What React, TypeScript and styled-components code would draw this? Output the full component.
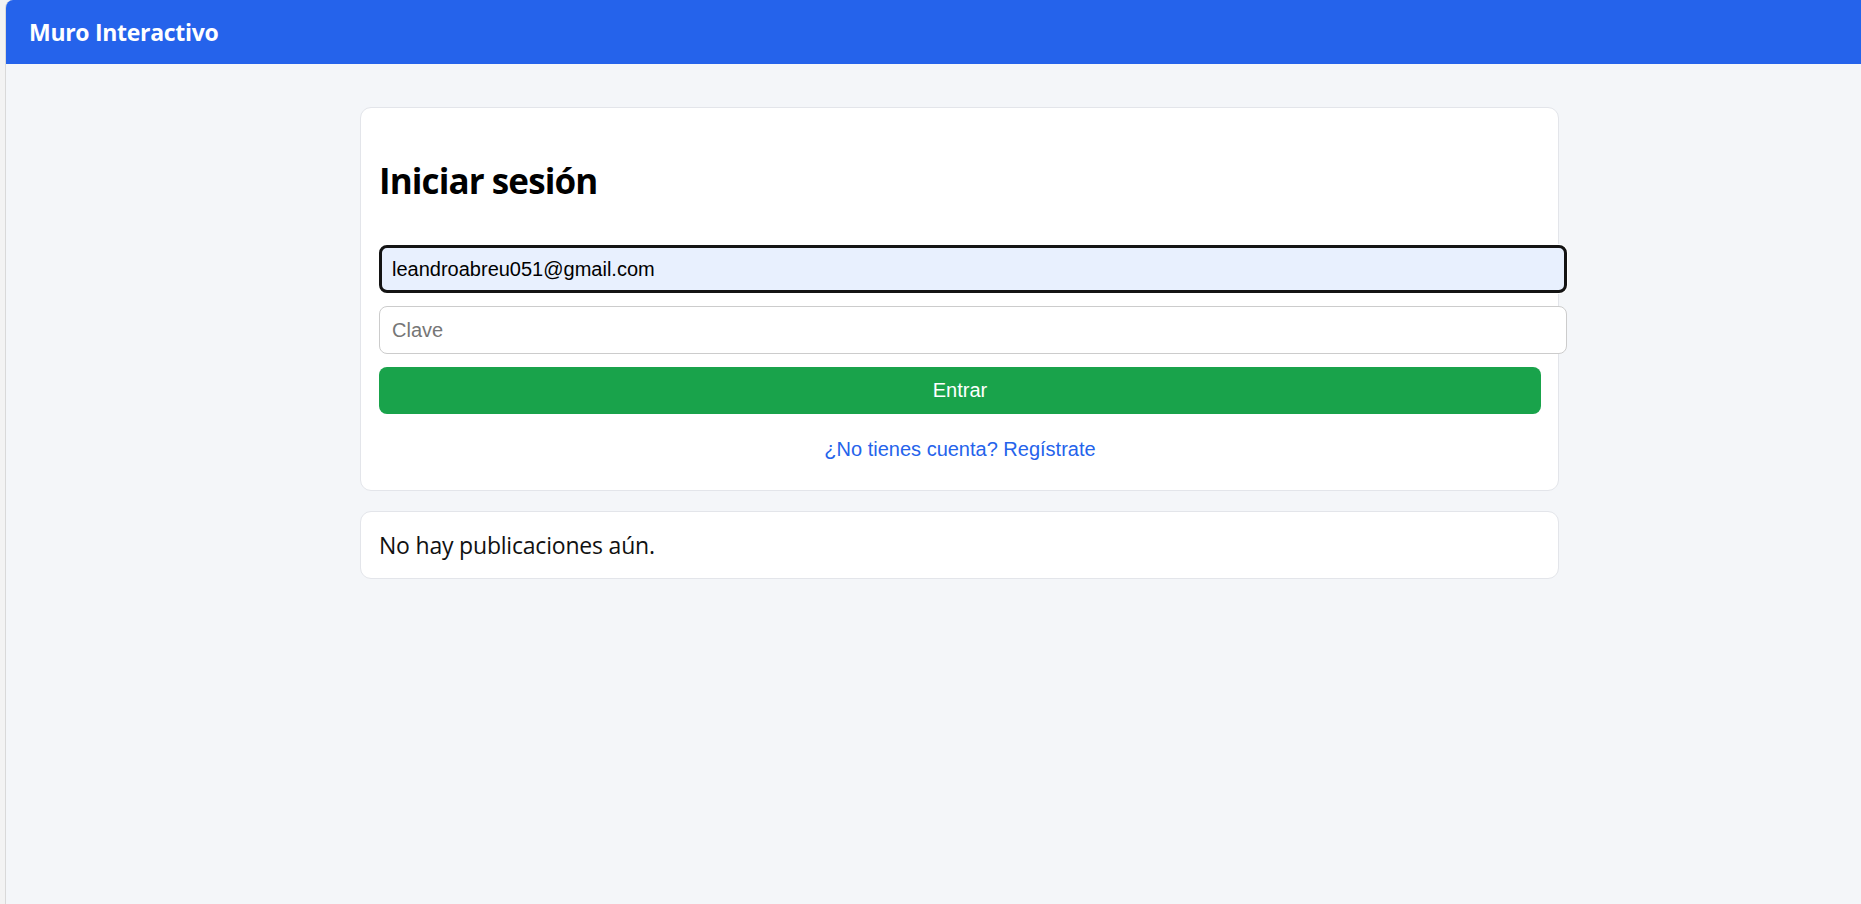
import React from "react";
import styled, { createGlobalStyle } from "styled-components";

const GlobalStyle = createGlobalStyle`
  html, body {
    margin: 0;
    padding: 0;
    background: #f3f3f3;
  }
  #root {
    min-height: 100vh;
  }
  * {
    box-sizing: border-box;
  }
`;

const Frame = styled.div`
  margin-left: 5px;
  min-height: 100vh;
  border-left: 1px solid #d9d9d9;
  border-top-left-radius: 8px;
  overflow: hidden;
  background: #f4f6f9;
`;

const Header = styled.header`
  height: 64px;
  display: flex;
  align-items: center;
  padding-left: 23px;
  background: #2563eb;
`;

const Brand = styled.span`
  font-family: "Open Sans", sans-serif;
  font-weight: 700;
  font-size: 23px;
  letter-spacing: -0.3px;
  color: #ffffff;
`;

const Main = styled.main`
  padding: 43px 0 40px 354px;
`;

const Column = styled.div`
  width: 1199px;
  display: flex;
  flex-direction: column;
  gap: 20px;
`;

const Card = styled.section`
  background: #ffffff;
  border: 1px solid #e3e5ea;
  border-radius: 11px;
  padding: 17px 17px 17px 18px;
`;

const Title = styled.h1`
  margin: 29px 0 25px;
  font-family: "Open Sans", sans-serif;
  font-weight: 700;
  font-size: 35px;
  line-height: 53px;
  letter-spacing: -0.9px;
  color: #000000;
`;

const Form = styled.form`
  display: flex;
  flex-direction: column;
  align-items: flex-start;
  gap: 13px;
  padding-top: 13px;
`;

const Field = styled.input<{ $focused?: boolean }>`
  display: block;
  width: calc(100% + 26px);
  height: 48px;
  border-radius: 8px;
  font-family: "Liberation Sans", Arial, sans-serif;
  font-size: 20px;
  color: #000000;
  outline: none;
  border: ${(p) => (p.$focused ? "3px solid #141414" : "1px solid #cccccc")};
  padding: ${(p) => (p.$focused ? "0 10px" : "0 12px")};
  background: ${(p) => (p.$focused ? "#e8f0fe" : "#ffffff")};
  box-shadow: ${(p) => (p.$focused ? "0 0 0 1px #ffffff" : "none")};

  &::placeholder {
    color: #767676;
  }
`;

const SubmitButton = styled.button`
  width: 100%;
  height: 47px;
  border: none;
  border-radius: 8px;
  background: #19a34b;
  color: #ffffff;
  font-family: "Liberation Sans", Arial, sans-serif;
  font-size: 20px;
  cursor: pointer;
`;

const SwitchLine = styled.p`
  margin: 24px 0 12px;
  text-align: center;
  font-family: "Liberation Sans", Arial, sans-serif;
  font-size: 20px;
  line-height: 23px;
`;

const SwitchLink = styled.a`
  color: #2563eb;
  text-decoration: none;
  cursor: pointer;
`;

const EmptyText = styled.p`
  margin: 0;
  font-family: "Open Sans", sans-serif;
  font-size: 23px;
  line-height: 32px;
  letter-spacing: -0.2px;
  color: #111111;
`;

export default function App() {
  return (
    <>
      <GlobalStyle />
      <Frame>
        <Header>
          <Brand>Muro Interactivo</Brand>
        </Header>
        <Main>
          <Column>
            <Card>
              <Title>Iniciar sesión</Title>
              <Form onSubmit={(e) => e.preventDefault()}>
                <Field
                  $focused
                  type="email"
                  defaultValue="leandroabreu051@gmail.com"
                />
                <Field type="password" placeholder="Clave" />
                <SubmitButton type="submit">Entrar</SubmitButton>
              </Form>
              <SwitchLine>
                <SwitchLink>¿No tienes cuenta? Regístrate</SwitchLink>
              </SwitchLine>
            </Card>
            <Card>
              <EmptyText>No hay publicaciones aún.</EmptyText>
            </Card>
          </Column>
        </Main>
      </Frame>
    </>
  );
}
